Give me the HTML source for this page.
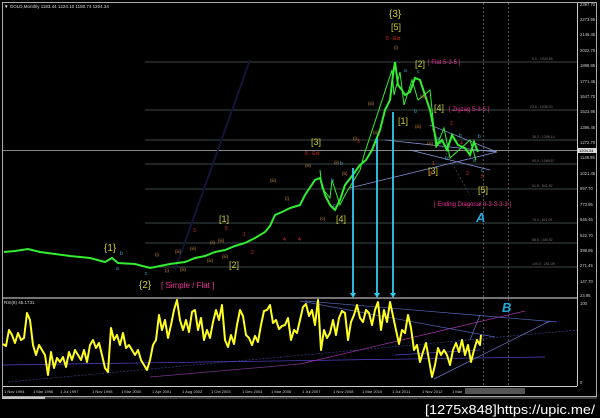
<!DOCTYPE html>
<html><head><meta charset="utf-8"><style>
html,body{margin:0;padding:0;background:#000;width:600px;height:418px;overflow:hidden}
svg{display:block}
text{font-family:"Liberation Sans",sans-serif}
</style></head><body>
<svg width="600" height="418" viewBox="0 0 600 418" xmlns="http://www.w3.org/2000/svg">
<rect width="600" height="418" fill="#000"/>
<rect x="2.5" y="2.5" width="594" height="394" fill="none" stroke="#aaa" stroke-width="1"/>
<line x1="3" y1="298" x2="577" y2="298" stroke="#999" stroke-width="1.5"/>
<line x1="577.5" y1="3" x2="577.5" y2="386" stroke="#ccc"/>
<line x1="3" y1="386.5" x2="577" y2="386.5" stroke="#ccc"/>
<line x1="2" y1="398" x2="597" y2="398" stroke="#777"/>
<line x1="2" y1="398" x2="45" y2="398" stroke="#fff" stroke-width="1.5"/>
<text x="4" y="8" fill="#ddd" font-size="4.5">▼ GOLD,Monthly  1183.44 1224.10 1180.74 1204.34</text>
<text x="4" y="304" fill="#ddd" font-size="4.5">RSI(8) 45.1731</text>
<g stroke="#3a4a48" stroke-width="1">
<line x1="145" y1="62" x2="577" y2="62"/><line x1="145" y1="110" x2="577" y2="110"/>
<line x1="145" y1="140" x2="577" y2="140"/><line x1="145" y1="164" x2="577" y2="164"/>
<line x1="145" y1="189" x2="577" y2="189"/><line x1="145" y1="223" x2="577" y2="223"/>
<line x1="145" y1="243" x2="577" y2="243"/><line x1="145" y1="267" x2="577" y2="267"/>
</g>
<line x1="3" y1="150.5" x2="577" y2="150.5" stroke="#888"/>
<g fill="#777" font-size="3.5"><text x="532" y="60">0.0 - 1920.65</text><text x="530" y="108">23.6 - 1636.03</text><text x="532" y="138">38.2 - 1295.14</text><text x="532" y="162">50.0 - 1069.57</text><text x="532" y="187">61.8 - 841.92</text><text x="532" y="221">76.4 - 611.09</text><text x="532" y="241">88.6 - 440.92</text><text x="532" y="265">100.0 - 251.08</text></g>
<line x1="483.5" y1="3" x2="483.5" y2="386" stroke="#555" stroke-dasharray="2,2"/>
<line x1="508.5" y1="3" x2="508.5" y2="386" stroke="#555" stroke-dasharray="2,2"/>
<line x1="175" y1="270" x2="250" y2="60" stroke="#14143a" stroke-width="2"/>
<g stroke="#8899dd" stroke-width="0.7" fill="none">
<line x1="385" y1="140" x2="497" y2="152"/><line x1="430" y1="125" x2="497" y2="152"/>
<line x1="350" y1="188" x2="497" y2="152"/><line x1="410" y1="150" x2="490" y2="170"/>
</g>
<line x1="430" y1="125" x2="470" y2="195" stroke="#556" stroke-dasharray="2,2" stroke-width="0.7"/>
<polyline fill="none" stroke="#33ee33" stroke-width="2" points="4,252 15,251 28,249 40,252 55,254 70,256 90,258 105,262 112,258 118,263 135,264 150,268 160,266 170,264 185,262 195,258 205,256 215,252 225,250 235,246 245,243 255,238 265,232 270,226 275,215 282,212 290,208 300,205 305,195 315,180 320,178 325,195 330,205 335,210 340,200 345,185 352,176 360,165 366,160 372,150 380,130 385,110 390,100 393,75 395,62 398,85 402,90 405,95 410,92 415,78 420,80 425,95 430,110 434,130 437,145 442,140 447,150 452,135 458,145 465,148 470,155 474,142 478,152"/>
<polyline fill="none" stroke="#33ee33" stroke-width="1" points="320,170 322,188 330,198 332,180 340,205 345,195 360,170 364,155 392,70 394,95 400,72 404,105 412,80 418,100 430,90 436,148 444,128 450,158 470,140 476,160"/>
<g stroke="#33ccee" stroke-width="1.8"><line x1="353" y1="168" x2="353" y2="296"/><line x1="377" y1="138" x2="377" y2="296"/><line x1="393" y1="112" x2="393" y2="296"/></g>
<g fill="#33ccee"><polygon points="350,293 356,293 353,298"/><polygon points="374,293 380,293 377,298"/><polygon points="390,293 396,293 393,298"/></g>
<g font-size="9" fill="#cccc33">
<text x="389" y="17" font-size="10">{3}</text><text x="391" y="30">[5]</text>
<text x="415" y="67">[2]</text><text x="434" y="111">[4]</text><text x="398" y="124">[1]</text>
<text x="311" y="145">[3]</text><text x="428" y="174">[3]</text><text x="478" y="193">[5]</text>
<text x="336" y="222">[4]</text><text x="219" y="222">[1]</text><text x="229" y="268">[2]</text>
<text x="104" y="251" font-size="10">{1}</text><text x="139" y="288" font-size="10">{2}</text>
</g>
<g font-size="6" fill="#ee3399"><text x="428" y="64">[ Flat 5-3-5 ]</text><text x="449" y="111">[ Zigzag 5-3-5 ]</text><text x="434" y="206">[ Ending Diagonal 3-3-3-3-3 ]</text></g>
<text x="161" y="288" font-size="8" fill="#ee3399">[ Simple / Flat ]</text>
<g font-size="5" fill="#dd3322"><text x="386" y="40">5 - Ext</text><text x="305" y="155">5 - Ext</text><text x="450" y="125">2</text><text x="460" y="145">4</text><text x="432" y="165">1</text><text x="430" y="175">5</text><text x="466" y="175">3</text><text x="481" y="178">5</text><text x="193" y="232">3</text><text x="225" y="230">5</text><text x="243" y="236">1</text><text x="251" y="254">2</text><text x="283" y="241">4</text><text x="357" y="143">3</text><text x="298" y="241">4</text></g>
<g font-size="4.5" fill="#cc8844"><text x="394" y="49">(i)</text><text x="373" y="134">(iii)</text><text x="368" y="105">(iii)</text><text x="420" y="98">(iii)</text><text x="415" y="128">(iii)</text><text x="427" y="145">(iii)</text><text x="353" y="140">(i)</text><text x="334" y="164">(ii)</text><text x="342" y="175">(b)</text><text x="305" y="167">(iii)</text><text x="320" y="220">(c)</text><text x="155" y="256">(i)</text><text x="175" y="253">(iii)</text><text x="190" y="250">(iii)</text><text x="210" y="244">(ii)</text><text x="218" y="242">(iii)</text><text x="165" y="272">(i)</text><text x="180" y="271">(iii)</text><text x="207" y="262">(iii)</text><text x="222" y="258">(iii)</text><text x="285" y="200">(i)</text><text x="270" y="182">(iii)</text></g>
<g font-size="5" fill="#33aacc"><text x="404" y="72">a</text><text x="417" y="73">c</text><text x="414" y="113">b</text><text x="437" y="140">a</text><text x="459" y="137">b</text><text x="478" y="138">b</text><text x="473" y="162">a</text><text x="481" y="172">c</text><text x="445" y="160">b</text><text x="340" y="165">b</text><text x="331" y="182">b</text><text x="333" y="207">c</text><text x="116" y="270">a</text><text x="120" y="255">b</text><text x="145" y="275">c</text></g>
<text x="476" y="222" font-size="13" fill="#22aadd" font-style="italic" font-weight="bold" font-family="Liberation Serif,serif">A</text>
<text x="502" y="312" font-size="13" fill="#22aadd" font-style="italic" font-weight="bold" font-family="Liberation Serif,serif">B</text>
<g stroke-width="0.7" fill="none">
<line x1="8" y1="382" x2="577" y2="330" stroke="#334488" stroke-dasharray="2,1.5"/>
<line x1="3" y1="365" x2="545" y2="357" stroke="#5544cc"/>
<line x1="150" y1="377" x2="300" y2="364" stroke="#773388"/>
<line x1="300" y1="364" x2="525" y2="311" stroke="#aa33aa"/>
<line x1="305" y1="301" x2="557" y2="322" stroke="#5566bb"/>
<line x1="300" y1="301" x2="495" y2="337" stroke="#5566bb"/>
<line x1="434" y1="379" x2="550" y2="321" stroke="#6677cc"/>
<line x1="395" y1="355" x2="480" y2="350" stroke="#5544cc"/>
<line x1="470" y1="340" x2="480" y2="315" stroke="#6677cc"/>
</g>
<polyline fill="none" stroke="#ffff22" stroke-width="2" stroke-linejoin="round" points="3,344 6,346 9,330 12,335 15,343 18,333 21,340 24,338 27,313 30,320 33,345 36,355 39,345 42,350 45,355 48,375 51,352 54,368 57,358 60,362 63,357 66,367 69,352 72,360 75,350 78,355 81,360 84,350 87,362 90,345 93,340 96,348 99,343 102,355 105,368 108,372 111,328 114,340 117,335 120,345 123,333 126,348 129,345 132,350 135,355 138,350 141,360 144,365 147,370 150,360 153,345 156,340 159,315 162,330 165,320 168,338 171,325 174,310 177,300 180,320 183,330 186,320 189,332 192,312 195,310 198,330 201,318 204,340 207,330 210,338 213,322 216,310 219,320 222,305 225,340 228,347 231,335 234,344 237,325 240,310 243,316 246,335 249,338 252,345 255,336 258,342 261,325 264,311 267,310 270,305 273,323 276,320 279,329 282,326 285,325 288,318 291,340 294,330 297,333 300,320 303,307 306,304 309,316 312,310 315,325 318,300 321,350 324,330 327,338 330,333 333,320 336,335 339,318 342,311 345,313 348,340 351,322 354,315 357,305 360,318 363,322 366,310 369,313 372,325 375,310 378,302 381,330 384,310 387,322 390,302 393,316 396,330 399,344 402,330 405,333 408,315 411,328 414,350 417,345 420,362 423,352 426,343 429,360 432,377 435,365 438,348 441,355 444,350 447,355 450,365 453,350 456,343 459,352 462,340 465,355 468,345 471,362 474,350 477,340 480,345 481,335"/>
<g font-size="4.2" fill="#ccc">
<text x="580" y="6">2397.70</text><text x="580" y="21">2273.95</text><text x="580" y="36">2146.45</text><text x="580" y="52">2022.70</text><text x="580" y="67">1898.95</text><text x="580" y="83">1771.45</text><text x="580" y="98">1647.70</text><text x="580" y="113">1523.95</text><text x="580" y="129">1396.45</text><text x="580" y="144">1272.70</text><text x="580" y="159">1148.95</text><text x="580" y="175">1021.45</text><text x="580" y="190">897.70</text><text x="580" y="206">773.95</text><text x="580" y="221">646.45</text><text x="580" y="237">522.70</text><text x="580" y="252">398.95</text><text x="580" y="267">271.45</text><text x="580" y="283">147.70</text><text x="580" y="297">23.95</text>
<text x="580" y="305">100</text><text x="580" y="384">0</text>
</g>
<rect x="578" y="148" width="19" height="5" fill="#ddd"/><text x="579" y="152" font-size="4" fill="#000">1204.34</text>
<g font-size="4" fill="#ccc">
<text x="4" y="393">1 Nov 1994</text><text x="33" y="393">1 Mar 1996</text><text x="60" y="393">1 Jul 1997</text><text x="92" y="393">1 Nov 1998</text><text x="121" y="393">1 Mar 2000</text><text x="152" y="393">1 Apr 2001</text><text x="182" y="393">1 Aug 2002</text><text x="211" y="393">1 Oct 2003</text><text x="242" y="393">1 Dec 2004</text><text x="271" y="393">1 Mar 2006</text><text x="302" y="393">1 Jul 2007</text><text x="333" y="393">1 Nov 2008</text><text x="362" y="393">1 Mar 2010</text><text x="392" y="393">1 Jul 2011</text><text x="422" y="393">1 Nov 2012</text><text x="452" y="393">1 Mar</text>
</g>
<rect x="465" y="388" width="60" height="6" fill="#555"/>
<text x="425" y="414" font-size="12.5" fill="#fff" font-family="Liberation Mono, monospace" textLength="170" lengthAdjust="spacingAndGlyphs">[1275x848]https://upic.me/</text>
</svg>
</body></html>
